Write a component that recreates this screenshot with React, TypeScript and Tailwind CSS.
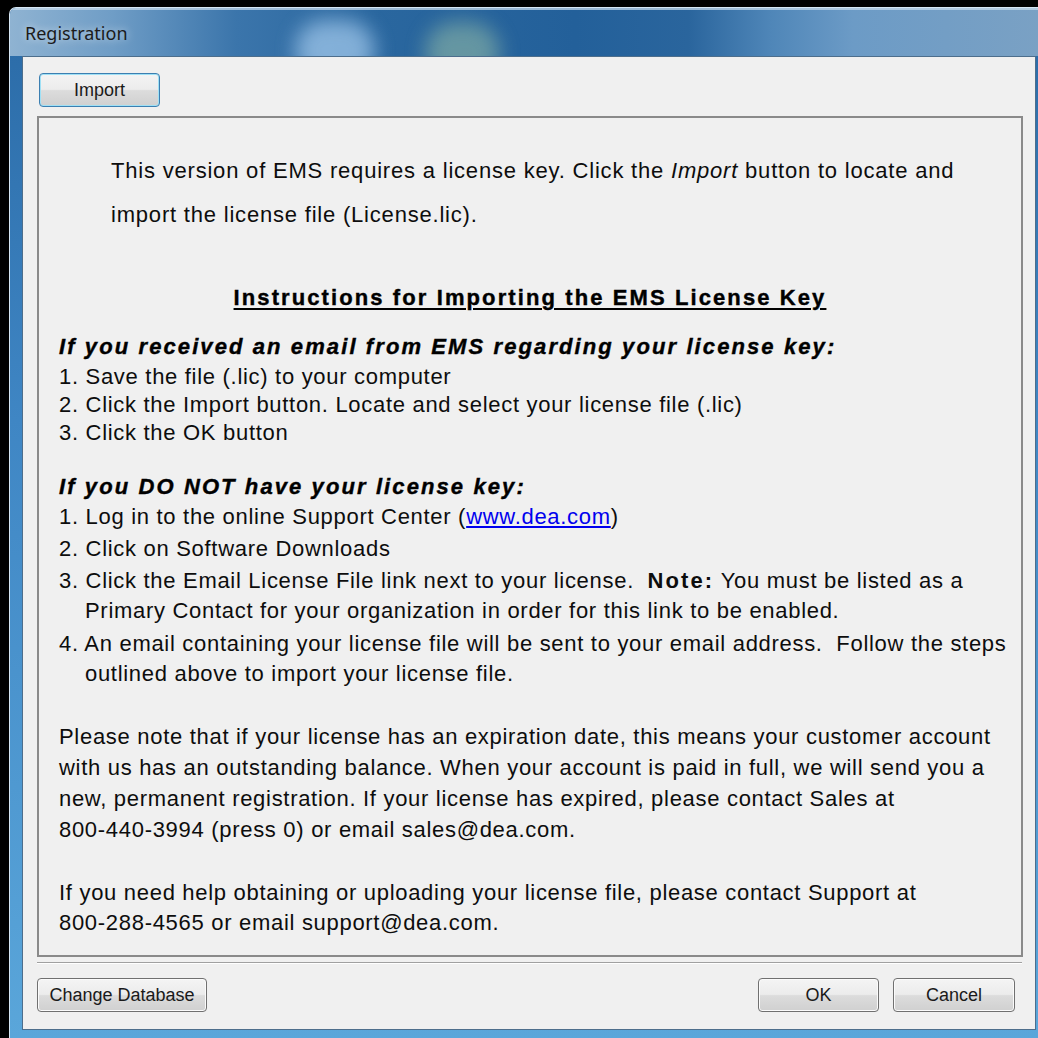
import React from "react"

const body = "font-['Liberation_Sans',Arial,sans-serif] text-[22px] tracking-[0.7px] text-[#0d0d0d] h-[28px] leading-[28px] whitespace-nowrap"
const italicHead = "font-['Liberation_Sans',Arial,sans-serif] text-[22px] tracking-[2.1px] [-webkit-text-stroke:0.4px_black] text-black font-bold italic h-[28px] leading-[28px] whitespace-nowrap"

function WinButton({ label, className, focused }: { label: string; className: string; focused?: boolean }) {
  return (
    <button
      className={
        "flex items-center justify-center rounded-[4px] border font-['Liberation_Sans',Arial,sans-serif] text-[18px] text-[#1a1a1a] bg-[linear-gradient(to_bottom,#f4f4f4_0%,#ececec_48%,#dcdcdc_52%,#d0d0d0_100%)] " +
        (focused
          ? "border-[#3c7fb1] shadow-[inset_0_0_0_1px_#9fe0f5] "
          : "border-[#707070] shadow-[inset_0_0_0_1px_#fbfbfb] ") +
        className
      }
    >
      {label}
    </button>
  )
}

export default function App() {
  return (
    <div className="w-[1038px] h-[1038px] bg-black overflow-hidden pt-[7px] pl-[9px]">
      <div className="relative w-[1029px] h-[1031px] rounded-tl-[7px] border-t border-l border-[#d6e6f3] bg-[linear-gradient(to_bottom,#2a6aa6_0%,#3f86c4_40%,#5aa6da_100%)] flex flex-col overflow-hidden">
        {/* title bar with glass gradient */}
        <div className="relative h-[48px] shrink-0 bg-[linear-gradient(to_right,#8fb3d2_0%,#6f9dc6_10%,#3b75ab_22%,#2a679f_35%,#23609a_55%,#2a659d_66%,#4f86b8_74%,#6c9bc6_82%,#7aa1c4_100%)] overflow-hidden">
          <div className="absolute left-[285px] top-[12px] w-[80px] h-[60px] rounded-full bg-[#a7cdef] opacity-70 blur-[10px]" />
          <div className="absolute left-[415px] top-[14px] w-[75px] h-[60px] rounded-full bg-[#8fb8a6] opacity-60 blur-[10px]" />
          <div className="absolute inset-x-0 top-0 h-[2px] bg-[#c9dcec] opacity-70" />
          <div className="absolute left-[15px] top-[12px] font-['Noto_Sans','Open_Sans',sans-serif] text-[18px] text-[#1b1b1b] [text-shadow:0_0_8px_rgba(255,255,255,0.7)]">
            Registration
          </div>
        </div>

        {/* client area */}
        <div className="ml-[12px] mr-[2px] h-[974px] border border-[#4d6e8c] bg-[#f0f0f0] flex flex-col pl-[14px] pr-[12px]">
          <div className="pt-[16px] pl-[2px]">
            <WinButton label="Import" focused className="w-[121px] h-[34px]" />
          </div>

          <div className="mt-[9px] w-[986px] h-[841px] border-2 border-[#8a8a8a] flex flex-col">
            <div className={body + " mt-[39px] pl-[72px] tracking-[0.8px]"}>
              This version of EMS requires a license key. Click the <span className="italic">Import</span> button to locate and
            </div>
            <div className={body + " mt-[16px] pl-[72px] tracking-[0.8px]"}>import the license file (License.lic).</div>

            <div className={body + " mt-[55px] text-center font-bold tracking-[2.1px] [-webkit-text-stroke:0.4px_black] underline underline-offset-[3px] text-black"}>
              Instructions for Importing the EMS License Key
            </div>

            <div className={italicHead + " mt-[21px] pl-[20px]"}>If you received an email from EMS regarding your license key:</div>
            <div className={body + " mt-[2px] pl-[20px]"}>1. Save the file (.lic) to your computer</div>
            <div className={body + " pl-[20px]"}>2. Click the Import button. Locate and select your license file (.lic)</div>
            <div className={body + " pl-[20px]"}>3. Click the OK button</div>

            <div className={italicHead + " mt-[26px] pl-[20px]"}>If you DO NOT have your license key:</div>
            <div className={body + " mt-[2px] pl-[20px]"}>
              1. Log in to the online Support Center (<span className="text-[#0000ee] underline">www.dea.com</span>)
            </div>
            <div className={body + " mt-[4px] pl-[20px]"}>2. Click on Software Downloads</div>
            <div className={body + " mt-[4px] pl-[20px]"}>
              3. Click the Email License File link next to your license.&nbsp;&nbsp;<span className="font-bold tracking-[2.1px]">Note:</span> You must be listed as a
            </div>
            <div className={body + " mt-[2px] pl-[46px]"}>Primary Contact for your organization in order for this link to be enabled.</div>
            <div className={body + " mt-[5px] pl-[20px]"}>
              4. An email containing your license file will be sent to your email address.&nbsp;&nbsp;Follow the steps
            </div>
            <div className={body + " mt-[2px] pl-[46px]"}>outlined above to import your license file.</div>

            <div className={body + " mt-[35px] pl-[20px]"}>
              Please note that if your license has an expiration date, this means your customer account
            </div>
            <div className={body + " mt-[3px] pl-[20px]"}>
              with us has an outstanding balance. When your account is paid in full, we will send you a
            </div>
            <div className={body + " mt-[3px] pl-[20px]"}>
              new, permanent registration. If your license has expired, please contact Sales at
            </div>
            <div className={body + " mt-[3px] pl-[20px]"}>800-440-3994 (press 0) or email sales@dea.com.</div>

            <div className={body + " mt-[35px] pl-[20px]"}>
              If you need help obtaining or uploading your license file, please contact Support at
            </div>
            <div className={body + " mt-[2px] pl-[20px]"}>800-288-4565 or email support@dea.com.</div>
          </div>

          {/* separator */}
          <div className="mt-[5px] w-[985px] h-[2px] border-t border-[#a0a0a0] border-b border-b-white" />

          <div className="mt-[14px] flex items-center">
            <WinButton label="Change Database" className="w-[170px] h-[34px]" />
            <div className="flex-1" />
            <WinButton label="OK" className="w-[121px] h-[34px]" />
            <WinButton label="Cancel" className="ml-[14px] w-[122px] h-[34px] mr-[8px]" />
          </div>
        </div>
      </div>
    </div>
  )
}
